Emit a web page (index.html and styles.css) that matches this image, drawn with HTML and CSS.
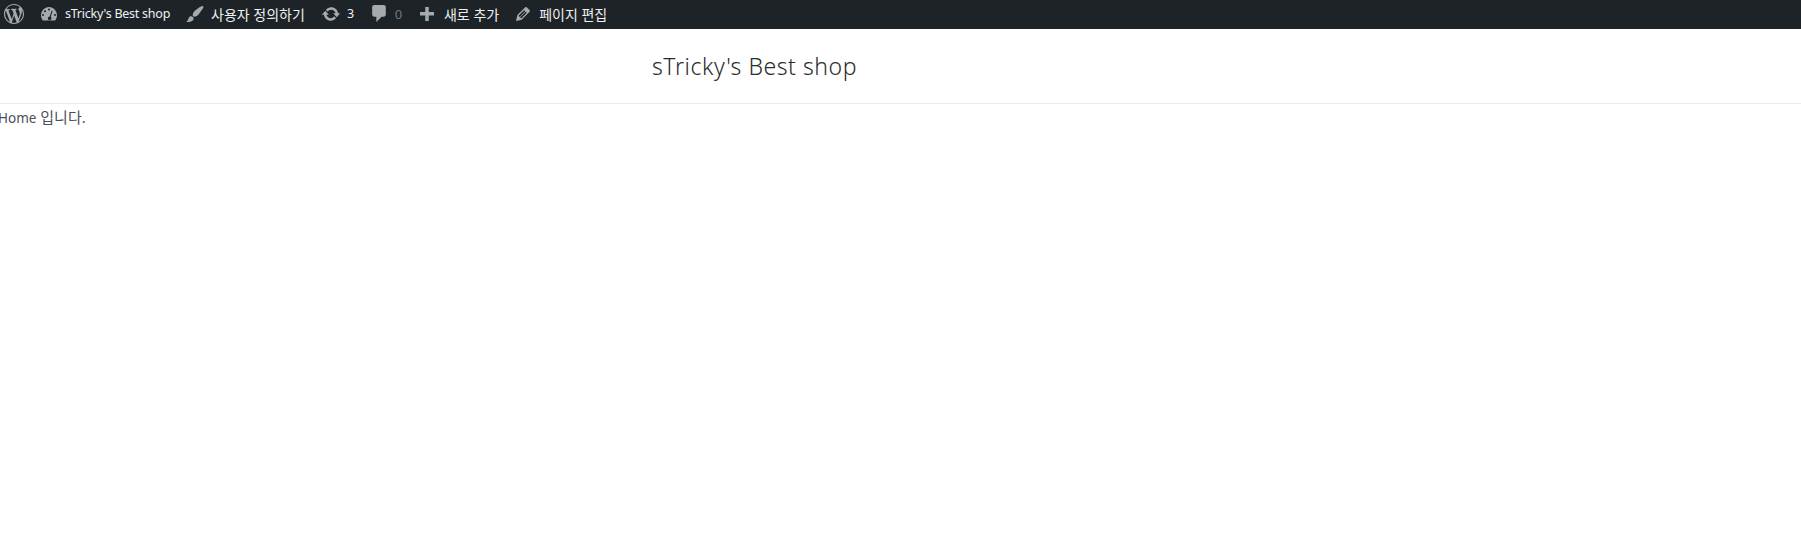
FILE: index.html
```html
<!DOCTYPE html>
<html>

<head>
    <meta charset="utf-8">
    <link rel="stylesheet" href="styles.css">
</head>

<body>

    <div class="admin-bar">
        <a class="bar-item bar-logo">
            <svg class="bar-icon logo-icon" viewBox="0 0 20 20"><path d="M20 10c0-5.510-4.490-10-10-10C4.480 0 0 4.490 0 10c0 5.520 4.480 10 10 10 5.510 0 10-4.480 10-10zM7.780 15.370L4.370 6.220c.55-.02 1.170-.08 1.170-.08.5-.06.44-1.130-.06-1.110 0 0-1.450.11-2.370.11-.18 0-.37 0-.58-.01C4.120 2.690 6.870 1.110 10 1.110c2.330 0 4.450.87 6.050 2.340-.68-.11-1.650.39-1.650 1.580 0 .74.450 1.360.9 2.100.35.610.55 1.360.55 2.460 0 1.490-1.400 5-1.400 5l-3.030-8.370c.54-.02.82-.17.82-.17.5-.05.44-1.250-.06-1.220 0 0-1.440.12-2.380.12-.87 0-2.330-.12-2.330-.12-.5-.03-.56 1.200-.06 1.220l.92.08 1.260 3.410zM17.410 10c.24-.64.74-1.870.43-4.250.7 1.290 1.050 2.710 1.050 4.250 0 3.290-1.730 6.240-4.400 7.780.97-2.590 1.940-5.200 2.920-7.780zM6.100 18.090C3.120 16.650 1.110 13.530 1.110 10c0-1.300.23-2.480.72-3.590C3.250 10.300 4.670 14.200 6.100 18.090zm4.030-6.630l2.580 6.980c-.85.29-1.740.44-2.710.44-.79 0-1.570-.11-2.290-.33.81-2.380 1.620-4.730 2.420-7.090z"/></svg>
        </a>
        <a class="bar-item bar-site">
            <svg class="bar-icon" viewBox="0 0 20 20"><path fill-rule="evenodd" d="M3.800 16.500h12.400c1.100-1.400 1.800-3.200 1.800-5.200C18 6.800 14.400 3 10 3S2 6.800 2 11.300c0 2 .7 3.800 1.800 5.200zM10 4.500a1 1 0 1 1 0 2 1 1 0 0 1 0-2zM6 6.200a1 1 0 1 1 0 2 1 1 0 0 1 0-2zM4 10a1 1 0 1 1 0 2 1 1 0 0 1 0-2zM16 10a1 1 0 1 1 0 2 1 1 0 0 1 0-2zM12.700 6.500l.9.400-1.900 6a1.800 1.800 0 1 1-1-.3z"/></svg>
            <span class="bar-latin">sTricky's Best shop</span>
        </a>
        <a class="bar-item bar-custom">
            <svg class="bar-icon" viewBox="0 0 20 20"><path d="M18.330 3.570s.27-.8-.31-1.360c-.53-.52-1.220-.24-1.220-.24-.61.3-5.760 3.470-7.670 5.570-.86.96-2.060 3.790-1.090 4.820.92.98 3.960-.17 4.790-1 2.060-2.060 5.210-7.170 5.500-7.790zM1.400 17.650c2.370-1.560 1.460-3.410 3.230-4.850.93-.75 2.300-.63 3.210.25.9.88.99 2.270.16 3.210-1.600 1.840-5.850 2.210-6.600 1.390z"/></svg>
            <span>사용자 정의하기</span>
        </a>
        <a class="bar-item bar-updates">
            <svg class="bar-icon" viewBox="0 0 20 20"><path d="M10.200 3.280c3.530 0 6.430 2.610 6.920 6h2.080l-3.500 4-3.500-4h2.320c-.45-1.970-2.210-3.440-4.320-3.440-1.450 0-2.730.71-3.540 1.790L4.950 5.660C6.230 4.200 8.110 3.280 10.200 3.280zm-.4 13.440c-3.520 0-6.430-2.610-6.920-6H.8l3.500-4c1.170 1.330 2.330 2.670 3.500 4H5.480c.45 1.970 2.210 3.440 4.320 3.440 1.450 0 2.730-.71 3.540-1.790l1.710 1.950c-1.280 1.460-3.150 2.400-5.250 2.400z"/></svg>
            <span class="bar-latin">3</span>
        </a>
        <a class="bar-item bar-comments">
            <svg class="bar-icon comment-icon" viewBox="0 0 20 20"><path d="M5 2h9c1.100 0 2 .9 2 2v7c0 1.100-.9 2-2 2h-2l-5 5v-5H5c-1.100 0-2-.9-2-2V4c0-1.100.9-2 2-2z"/></svg>
            <span class="bar-latin muted">0</span>
        </a>
        <a class="bar-item bar-new">
            <svg class="bar-icon" viewBox="0 0 20 20"><path d="M17 8v3.500h-5.250V17h-3.500v-5.500H3V8h5.250V3h3.500v5z"/></svg>
            <span>새로 추가</span>
        </a>
        <a class="bar-item bar-edit">
            <svg class="bar-icon" viewBox="0 0 20 20"><path d="M13.890 3.390l2.710 2.720c.46.46.42 1.240.03 1.640l-8.010 8.020-5.560 1.160 1.160-5.580s7.600-7.630 7.990-8.030c.39-.39 1.220-.39 1.680.07zm-2.730 2.790l-5.590 5.610 1.110 1.110 5.540-5.650zm-2.970 8.230l5.580-5.600-1.070-1.080-5.590 5.600z"/></svg>
            <span>페이지 편집</span>
        </a>
    </div>

    <div class="site-header">
        <span class="site-title">sTricky's Best shop</span>
    </div>

    <div class="page-content"><span class="page-latin">Home</span> 입니다.</div>

</body>

</html>
```

FILE: styles.css
```css
body {
    margin: 0;
    background-color: #fff;
    font-family: "Noto Sans", "Noto Sans CJK KR", sans-serif;
    color: #3a3a3a;
    overflow-x: hidden;
}

.admin-bar {
    display: flex;
    align-items: center;
    box-sizing: border-box;
    height: 29px;
    padding-bottom: 2px;
    background-color: #1d2327;
    color: #f0f0f1;
    font-size: 14px;
}

.bar-item {
    display: flex;
    align-items: center;
    gap: 6px;
}

.bar-latin {
    font-size: 12.5px;
    letter-spacing: -0.25px;
}

.bar-icon {
    width: 20px;
    height: 20px;
    fill: #a7aaad;
    flex-shrink: 0;
}

.comment-icon {
    width: 21px;
    height: 21px;
}

.bar-logo {
    margin-left: 4px;
}

.bar-site,
.bar-custom,
.bar-comments,
.bar-new {
    margin-left: 15px;
}

.bar-updates {
    margin-left: 16px;
}

.bar-edit {
    margin-left: 14px;
}

.bar-comments {
    gap: 5px;
}

.bar-new {
    gap: 7px;
}

.bar-comments .bar-latin {
    font-size: 13px;
}

.muted {
    color: #72777c;
}

.site-header {
    height: 74px;
    padding-left: 652px;
    display: flex;
    align-items: center;
    border-bottom: 1px solid #eaeaea;
}

.site-title {
    font-size: 23px;
    font-weight: 300;
    letter-spacing: 0.55px;
    color: #2b2b2b;
}

.page-content {
    margin-left: -2px;
    padding-top: 2px;
    font-size: 15px;
    color: #4b4f58;
}

.page-latin {
    font-size: 13.5px;
}
```
